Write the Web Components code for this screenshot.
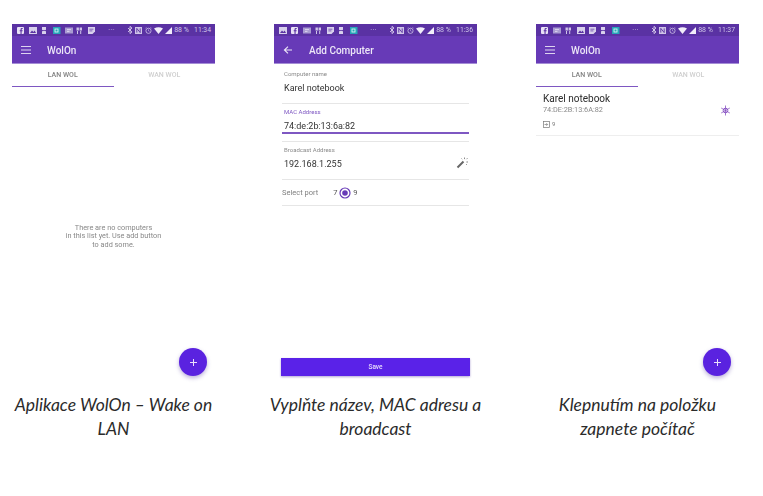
<!DOCTYPE html>
<html lang="cs">
<head>
<meta charset="utf-8">
<title>WolOn</title>
<style>
  html, body { margin: 0; background: #fff; }
  body { font-family: Roboto, sans-serif; }
</style>
</head>
<body>
<wol-gallery>
  <wol-shot>
    <wol-phone heading="WolOn" nav="menu" time="11:34" icons="f,img,hg,teal,box,fork,doc">
      <wol-tabs></wol-tabs>
      <wol-empty>There are no computers<br>in this list yet. Use add button<br>to add some.</wol-empty>
      <wol-fab></wol-fab>
    </wol-phone>
    <span slot="caption">Aplikace WolOn – Wake on<br>LAN</span>
  </wol-shot>

  <wol-shot>
    <wol-phone heading="Add Computer" nav="back" time="11:36" icons="img,f,box,fork,doc,hg,teal">
      <wol-form>
        <wol-field label="Computer name" value="Karel notebook"></wol-field>
        <wol-field label="MAC Address" value="74:de:2b:13:6a:82" active></wol-field>
        <wol-field label="Broadcast Address" value="192.168.1.255">
          <svg slot="action" width="13" height="13" viewBox="0 0 13 13">
            <path d="M1.5 11.5 7.5 5.5" stroke="#666" stroke-width="2" fill="none"/>
            <path d="M8.5 1.5v1.6M11.5 2.2l-1 1M12 6h-1.6M11 9l-.8-.8M5.5 2.5l.7.7" stroke="#888" stroke-width="1" fill="none"/>
          </svg>
        </wol-field>
        <wol-port></wol-port>
      </wol-form>
      <wol-save>Save</wol-save>
    </wol-phone>
    <span slot="caption">Vyplňte název, MAC adresu a<br>broadcast</span>
  </wol-shot>

  <wol-shot>
    <wol-phone heading="WolOn" nav="menu" time="11:37" icons="f,box,fork,img,doc,hg,teal">
      <wol-tabs></wol-tabs>
      <wol-computer name="Karel notebook" mac="74:DE:2B:13:6A:82" port="9"></wol-computer>
      <wol-fab></wol-fab>
    </wol-phone>
    <span slot="caption">Klepnutím na položku<br>zapnete počítač</span>
  </wol-shot>
</wol-gallery>

<script>
const STATUS_ICONS = {
  f: '<rect x="0" y="0" width="7" height="7" rx="1" fill="#e8e2f5"/><path d="M4.6 7V4.2h1V3.2h-1V2.5q0-.6.6-.6h.5V1h-.9Q3.5 1 3.5 2.4v.8h-.8v1h.8V7z" fill="#5a32a3"/>',
  img: '<rect x="0" y="0" width="8" height="7" fill="#d8d0ec"/><path d="M1 6 3 3.6l1.4 1.4L5.6 3.6 7 6z" fill="#5a32a3"/>',
  hg: '<path d="M1 0h4v2.7L3.8 3.5 5 4.4V7H1V4.4l1.2-.9L1 2.7z" fill="#d8d0ec"/><path d="M1.5 3.5h3" stroke="#5a32a3" stroke-width=".8"/>',
  teal: '<rect x="-.5" y="0" width="8" height="7" fill="#26a6b8"/><rect x="2" y="2" width="3" height="3" fill="none" stroke="#d8f4f6" stroke-width=".9"/>',
  box: '<rect x="0" y=".5" width="8" height="6" fill="#a99bd2"/><path d="M2 2.6h4M2 4.4h2.5" stroke="#e8e2f5" stroke-width=".8"/>',
  fork: '<path d="M.5 .5h2.4v3H.5zM3.6 .5H6v3H3.6zM1 4h1v3H1zM4.2 4h1v3h-1z" fill="#cfc5e8"/>',
  doc: '<path d="M0 0h7v4.6L4.5 7H0z" fill="#d8d0ec"/><path d="M1.4 2.2h4M1.4 3.9h3" stroke="#5a32a3" stroke-width=".7"/>'
};

class WolGallery extends HTMLElement {
  constructor() {
    super();
    this.attachShadow({mode: 'open'}).innerHTML = `
      <style>
        :host {
          display: grid;
          grid-template-columns: repeat(3, 203px);
          column-gap: 59px;
          padding: 24px 0 0 12px;
        }
      </style>
      <slot></slot>`;
  }
}

class WolShot extends HTMLElement {
  constructor() {
    super();
    this.attachShadow({mode: 'open'}).innerHTML = `
      <style>
        :host { display: block; }
        p {
          margin: 13px -10px 0;
          font: italic 400 17.5px/24px Lato, sans-serif;
          color: #2b2b2b;
          text-align: center;
          white-space: nowrap;
        }
      </style>
      <slot></slot>
      <p><slot name="caption"></slot></p>`;
  }
}

class WolPhone extends HTMLElement {
  constructor() {
    super();
    const nav = this.getAttribute('nav') === 'back'
      ? '<path d="M8 3.6 4.4 7 8 10.4M4.6 7h7.4" stroke="#ece6f7" stroke-width="1.1" fill="none"/>'
      : '<path d="M3 3.5h10M3 7h10M3 10.5h10" stroke="#ddd3ef" stroke-width="1.2" fill="none"/>';
    const icons = this.getAttribute('icons').split(',')
      .map(k => `<svg width="8" height="7" viewBox="0 0 8 7">${STATUS_ICONS[k]}</svg>`).join('');
    this.attachShadow({mode: 'open'}).innerHTML = `
      <style>
        :host {
          display: flex;
          flex-direction: column;
          position: relative;
          height: 356px;
          background: #fff;
          filter: blur(.5px);
          font-family: Roboto, sans-serif;
        }
        .status {
          height: 12px;
          display: flex;
          align-items: center;
          padding: 0 4px 0 5px;
          background: #5a32a3;
          color: #cfc5e8;
          font-size: 7px;
        }
        .left { display: flex; gap: 3.9px; }
        .dots { margin-left: 12px; letter-spacing: .3px; }
        .right { margin-left: auto; display: flex; align-items: center; gap: 2.2px; }
        .time { margin-left: 3px; font-size: 6.8px; }
        .bar {
          height: 26px;
          display: flex;
          align-items: center;
          gap: 13px;
          padding: 1px 0 0 6px;
          background: #673ab7;
          border-bottom: 1px solid #a48dd6;
          color: #ece6f7;
          font-size: 10px;
          font-weight: 500;
        }
        ::slotted(wol-save) { margin-top: auto; }
      </style>
      <div class="status">
        <div class="left">${icons}</div>
        <span class="dots">···</span>
        <div class="right">
          <svg width="6" height="8" viewBox="0 0 6 8"><path d="M1 2l4 4-2 1.6V.4l2 1.6-4 4" stroke="#e4ddf3" stroke-width=".8" fill="none"/></svg>
          <svg width="7" height="7" viewBox="0 0 7 7"><rect width="7" height="7" fill="#cfc5e8"/><path d="M1.8 5.6V1.4l3.4 4.2V1.4" stroke="#5a32a3" stroke-width=".9" fill="none"/></svg>
          <svg width="7" height="7" viewBox="0 0 7 7"><circle cx="3.5" cy="3.8" r="2.6" stroke="#cfc5e8" stroke-width=".8" fill="none"/><path d="M3.5 2.4v1.5l1 .5M.5 1.2 1.6.3M6.5 1.2 5.4.3" stroke="#cfc5e8" stroke-width=".6" fill="none"/></svg>
          <svg width="9" height="7" viewBox="0 0 9 7"><path d="M0 1.5Q4.5-1 9 1.5L4.5 7z" fill="#f1edf9"/></svg>
          <svg width="7" height="7" viewBox="0 0 7 7"><path d="M0 7 7 0v7z" fill="#f1edf9"/></svg>
          <span>88 %</span>
          <span class="time">${this.getAttribute('time')}</span>
        </div>
      </div>
      <div class="bar">
        <svg width="16" height="14" viewBox="0 0 16 14">${nav}</svg>
        <span>${this.getAttribute('heading')}</span>
      </div>
      <slot></slot>`;
  }
}

class WolTabs extends HTMLElement {
  constructor() {
    super();
    this.attachShadow({mode: 'open'}).innerHTML = `
      <style>
        :host {
          display: grid;
          grid-template-columns: 1fr 1fr;
          height: 23px;
          font-size: 7px;
          font-weight: 500;
          text-align: center;
          line-height: 22px;
        }
        div { color: #cfcfcf; height: 23px; box-sizing: border-box; }
        .on { color: #808080; border-bottom: 1.5px solid #7e57c2; }
      </style>
      <div class="on">LAN WOL</div>
      <div>WAN WOL</div>`;
  }
}

class WolEmpty extends HTMLElement {
  constructor() {
    super();
    this.attachShadow({mode: 'open'}).innerHTML = `
      <style>
        :host {
          display: flex;
          flex: 1;
          align-items: center;
          justify-content: center;
          padding-top: 6px;
          text-align: center;
          font-size: 7.3px;
          line-height: 8.6px;
          color: #888;
        }
      </style>
      <div><slot></slot></div>`;
  }
}

class WolFab extends HTMLElement {
  constructor() {
    super();
    this.attachShadow({mode: 'open'}).innerHTML = `
      <style>
        :host {
          position: absolute;
          right: 8px;
          bottom: 4px;
          width: 28px;
          height: 28px;
          display: flex;
          align-items: center;
          justify-content: center;
          border-radius: 50%;
          background: #5a22e0;
          box-shadow: 0 2px 4px rgba(60, 30, 150, .35);
        }
      </style>
      <svg width="7" height="7" viewBox="0 0 7 7"><path d="M3.5 0v7M0 3.5h7" stroke="#eadffb" stroke-width="1"/></svg>`;
  }
}

class WolForm extends HTMLElement {
  constructor() {
    super();
    this.attachShadow({mode: 'open'}).innerHTML = `
      <style>
        :host { display: block; padding: 2px 8px 0; }
      </style>
      <slot></slot>`;
  }
}

class WolField extends HTMLElement {
  constructor() {
    super();
    const active = this.hasAttribute('active');
    this.attachShadow({mode: 'open'}).innerHTML = `
      <style>
        :host {
          display: block;
          position: relative;
          height: 38px;
          box-sizing: border-box;
          padding: 4px 2px 0;
          border-bottom: 1px solid #e6e6e6;
        }
        label { display: block; font-size: 6px; line-height: 7px; color: ${active ? '#7e57c2' : '#8a8a8a'}; }
        .value { margin-top: 4px; font-size: 9px; line-height: 14px; color: #333; }
        .line { margin: -1px -2px 0 -2px; height: 2px; background: #7e57c2; }
        .action { position: absolute; right: 0; top: 12px; }
      </style>
      <label>${this.getAttribute('label')}</label>
      <div class="value">${this.getAttribute('value')}</div>
      ${active ? '<div class="line"></div>' : ''}
      <div class="action"><slot name="action"></slot></div>`;
  }
}

class WolPort extends HTMLElement {
  constructor() {
    super();
    this.attachShadow({mode: 'open'}).innerHTML = `
      <style>
        :host {
          display: flex;
          align-items: center;
          height: 26px;
          box-sizing: border-box;
          border-bottom: 1px solid #e6e6e6;
          font-size: 7.5px;
          color: #808080;
        }
        .num { color: #555; }
        .seven { margin-left: 15px; margin-right: 2px; }
        svg { margin-right: 2px; }
      </style>
      <span>Select port</span>
      <span class="num seven">7</span>
      <svg width="12" height="12" viewBox="0 0 12 12"><circle cx="6" cy="6" r="5" stroke="#673ab7" stroke-width="1.2" fill="none"/><circle cx="6" cy="6" r="2.8" fill="#673ab7"/></svg>
      <span class="num">9</span>`;
  }
}

class WolSave extends HTMLElement {
  constructor() {
    super();
    this.attachShadow({mode: 'open'}).innerHTML = `
      <style>
        :host {
          display: block;
          height: 18px;
          margin: 0 7px 4px;
          background: #5a22e8;
          box-shadow: 0 1px 2px rgba(60, 30, 150, .4);
          color: #e8dcfb;
          font-size: 6.5px;
          font-weight: 500;
          line-height: 18px;
          text-align: center;
        }
      </style>
      <slot></slot>`;
  }
}

class WolComputer extends HTMLElement {
  constructor() {
    super();
    this.attachShadow({mode: 'open'}).innerHTML = `
      <style>
        :host {
          display: flex;
          align-items: center;
          justify-content: space-between;
          height: 49px;
          box-sizing: border-box;
          padding: 0 8px 2px 7px;
          border-bottom: 1px solid #eee;
        }
        .name { font-size: 10px; line-height: 13px; color: #2b2b2b; }
        .mac { font-size: 7.3px; line-height: 9px; color: #8a8a8a; }
        .port { display: flex; align-items: center; gap: 2px; margin-top: 6px; font-size: 6px; line-height: 8px; color: #777; }
      </style>
      <div>
        <div class="name">${this.getAttribute('name')}</div>
        <div class="mac">${this.getAttribute('mac')}</div>
        <div class="port">
          <svg width="7" height="7" viewBox="0 0 7 7"><rect x=".5" y=".5" width="6" height="6" stroke="#777" stroke-width=".7" fill="none"/><path d="M1.5 3.5h3M3.4 2.2l1.2 1.3-1.2 1.3" stroke="#777" stroke-width=".7" fill="none"/></svg>
          <span>${this.getAttribute('port')}</span>
        </div>
      </div>
      <svg width="11" height="11" viewBox="0 0 11 11">
        <circle cx="5.5" cy="5.5" r="2.3" stroke="#8a56c4" stroke-width="1" fill="none"/>
        <path d="M5.5.5v10M1.2 3l8.6 5M1.2 8l8.6-5" stroke="#8a56c4" stroke-width=".8"/>
      </svg>`;
  }
}

customElements.define('wol-gallery', WolGallery);
customElements.define('wol-shot', WolShot);
customElements.define('wol-phone', WolPhone);
customElements.define('wol-tabs', WolTabs);
customElements.define('wol-empty', WolEmpty);
customElements.define('wol-fab', WolFab);
customElements.define('wol-form', WolForm);
customElements.define('wol-field', WolField);
customElements.define('wol-port', WolPort);
customElements.define('wol-save', WolSave);
customElements.define('wol-computer', WolComputer);
</script>
</body>
</html>
